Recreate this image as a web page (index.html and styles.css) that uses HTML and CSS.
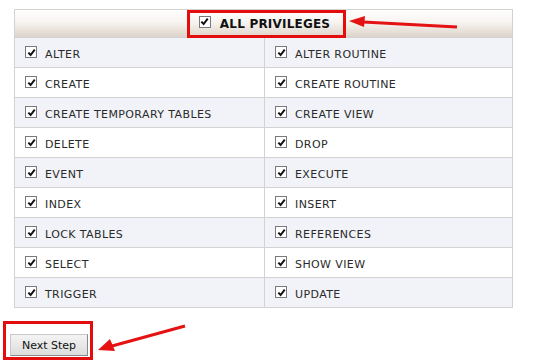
FILE: index.html
```html
<!DOCTYPE html>
<html lang="en">

<head>
  <meta charset="UTF-8">
  <title>Privileges</title>
  <link rel="stylesheet" href="styles.css">
</head>

<body>
  <div class="page">
    <div class="privileges">
      <div class="priv-head">
        <label class="all-box">
          <span class="check"><svg viewBox="0 0 10 10"><path d="M1.5 5.2 L4 7.8 L8.6 1.8" /></svg></span>
          ALL PRIVILEGES
        </label>
      </div>
      <div class="priv-grid">
        <div class="cell odd"><span class="check"><svg viewBox="0 0 10 10"><path d="M1.5 5.2 L4 7.8 L8.6 1.8" /></svg></span>ALTER</div>
        <div class="cell odd"><span class="check"><svg viewBox="0 0 10 10"><path d="M1.5 5.2 L4 7.8 L8.6 1.8" /></svg></span>ALTER ROUTINE</div>
        <div class="cell"><span class="check"><svg viewBox="0 0 10 10"><path d="M1.5 5.2 L4 7.8 L8.6 1.8" /></svg></span>CREATE</div>
        <div class="cell"><span class="check"><svg viewBox="0 0 10 10"><path d="M1.5 5.2 L4 7.8 L8.6 1.8" /></svg></span>CREATE ROUTINE</div>
        <div class="cell odd"><span class="check"><svg viewBox="0 0 10 10"><path d="M1.5 5.2 L4 7.8 L8.6 1.8" /></svg></span>CREATE TEMPORARY TABLES</div>
        <div class="cell odd"><span class="check"><svg viewBox="0 0 10 10"><path d="M1.5 5.2 L4 7.8 L8.6 1.8" /></svg></span>CREATE VIEW</div>
        <div class="cell"><span class="check"><svg viewBox="0 0 10 10"><path d="M1.5 5.2 L4 7.8 L8.6 1.8" /></svg></span>DELETE</div>
        <div class="cell"><span class="check"><svg viewBox="0 0 10 10"><path d="M1.5 5.2 L4 7.8 L8.6 1.8" /></svg></span>DROP</div>
        <div class="cell odd"><span class="check"><svg viewBox="0 0 10 10"><path d="M1.5 5.2 L4 7.8 L8.6 1.8" /></svg></span>EVENT</div>
        <div class="cell odd"><span class="check"><svg viewBox="0 0 10 10"><path d="M1.5 5.2 L4 7.8 L8.6 1.8" /></svg></span>EXECUTE</div>
        <div class="cell"><span class="check"><svg viewBox="0 0 10 10"><path d="M1.5 5.2 L4 7.8 L8.6 1.8" /></svg></span>INDEX</div>
        <div class="cell"><span class="check"><svg viewBox="0 0 10 10"><path d="M1.5 5.2 L4 7.8 L8.6 1.8" /></svg></span>INSERT</div>
        <div class="cell odd"><span class="check"><svg viewBox="0 0 10 10"><path d="M1.5 5.2 L4 7.8 L8.6 1.8" /></svg></span>LOCK TABLES</div>
        <div class="cell odd"><span class="check"><svg viewBox="0 0 10 10"><path d="M1.5 5.2 L4 7.8 L8.6 1.8" /></svg></span>REFERENCES</div>
        <div class="cell"><span class="check"><svg viewBox="0 0 10 10"><path d="M1.5 5.2 L4 7.8 L8.6 1.8" /></svg></span>SELECT</div>
        <div class="cell"><span class="check"><svg viewBox="0 0 10 10"><path d="M1.5 5.2 L4 7.8 L8.6 1.8" /></svg></span>SHOW VIEW</div>
        <div class="cell odd"><span class="check"><svg viewBox="0 0 10 10"><path d="M1.5 5.2 L4 7.8 L8.6 1.8" /></svg></span>TRIGGER</div>
        <div class="cell odd"><span class="check"><svg viewBox="0 0 10 10"><path d="M1.5 5.2 L4 7.8 L8.6 1.8" /></svg></span>UPDATE</div>
      </div>
    </div>

    <div class="step-box">
      <button type="button" class="next-btn">Next Step</button>
    </div>

    <!-- red annotation arrows -->
    <svg class="arrow arrow-top" width="110" height="16" viewBox="0 0 110 16">
      <path d="M108 12 L14 7" />
      <polygon points="0,6 16,1 15,12" />
    </svg>
    <svg class="arrow arrow-bottom" width="90" height="30" viewBox="0 0 90 30">
      <path d="M87 2 L14 22" />
      <polygon points="0,26 12,15 17,27" />
    </svg>
  </div>
</body>

</html>
```

FILE: styles.css
```css
body {
  margin: 0;
  background-color: #fff;
  font-family: "DejaVu Sans", Verdana, sans-serif;
  font-size: 11px;
  color: #222;
}

.page {
  position: relative;
  width: 540px;
  height: 364px;
  padding-top: 9px;
  box-sizing: border-box;
}

.privileges {
  margin-left: 14px;
  width: 499px;
  border: 1px solid #d2d2d2;
  border-bottom: none;
  box-sizing: border-box;
}

.priv-head {
  height: 28px;
  display: flex;
  justify-content: center;
  align-items: center;
  background: linear-gradient(#ffffff 0%, #f7f4f0 45%, #ddd4ca 100%);
  border-bottom: 1px solid #d2d2d2;
  box-sizing: border-box;
  padding-left: 6px;
}

.all-box {
  display: flex;
  align-items: center;
  gap: 9px;
  height: 28px;
  margin-top: 1px;
  padding: 0 13px 0 9px;
  border: 3px solid #e40d0d;
  box-sizing: border-box;
  font-weight: bold;
  font-size: 12px;
  color: #111;
  letter-spacing: 0.2px;
}

.priv-grid {
  display: grid;
  grid-template-columns: 250px 1fr;
}

.cell {
  height: 30px;
  display: flex;
  align-items: center;
  gap: 8px;
  padding: 4px 0 0 10px;
  border-bottom: 1px solid #d2d2d2;
  box-sizing: border-box;
  background-color: #fff;
  color: #2a2a2a;
  letter-spacing: 0.4px;
}

.cell:nth-child(odd) {
  border-right: 1px solid #d2d2d2;
}

.cell.odd {
  background-color: #f1f3f8;
}

.check {
  width: 12px;
  height: 12px;
  border: 1px solid #7a7a7a;
  background-color: #fff;
  box-sizing: border-box;
  display: flex;
  align-items: center;
  justify-content: center;
  margin-top: -5px;
}

.check svg {
  width: 9px;
  height: 9px;
}

.check path {
  fill: none;
  stroke: #111;
  stroke-width: 2.2;
}

.step-box {
  margin: 13px 0 0 3px;
  width: 90px;
  height: 39px;
  border: 3px solid #e40d0d;
  box-sizing: border-box;
  padding: 10px 0 0 4px;
}

.next-btn {
  width: 78px;
  height: 22px;
  padding: 0;
  font-family: "DejaVu Sans", Verdana, sans-serif;
  font-size: 11px;
  color: #111;
  background: linear-gradient(#f4f4f4, #dcdcdc);
  border: 1px solid #c8c8c8;
  border-right-color: #8a8a8a;
  border-bottom-color: #8a8a8a;
  border-radius: 0;
}

.arrow {
  position: absolute;
}

.arrow path {
  stroke: #e41212;
  stroke-width: 3;
  fill: none;
}

.arrow polygon {
  fill: #e41212;
}

.arrow-top {
  left: 349px;
  top: 15px;
}

.arrow-bottom {
  left: 98px;
  top: 324px;
}
```
